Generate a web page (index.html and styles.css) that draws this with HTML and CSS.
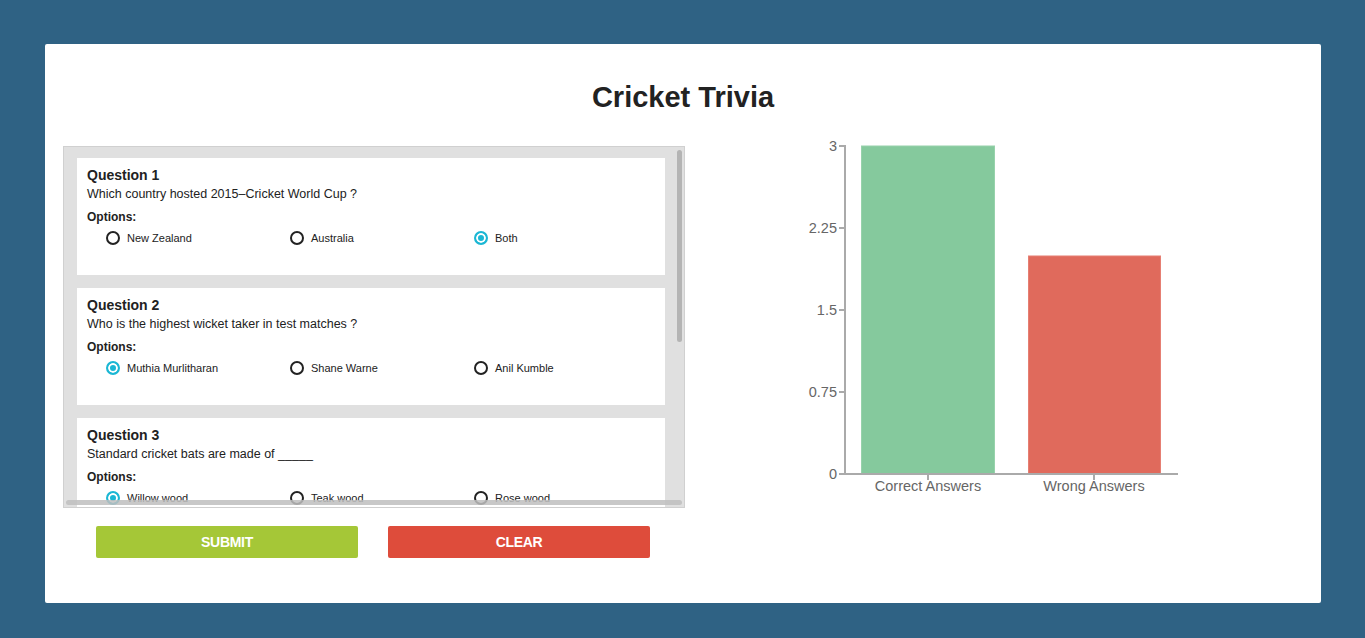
FILE: index.html
```html
<!DOCTYPE html>
<html lang="en">
<head>
<meta charset="utf-8">
<title>Cricket Trivia</title>
<link rel="stylesheet" href="styles.css">
</head>
<body>
<main class="panel">
  <h1 class="title">Cricket Trivia</h1>
  <div class="content">
    <section class="quiz">
      <div class="question-box">
        <div class="question-list">
          <div class="question-card">
            <h4 class="q-title">Question 1</h4>
            <p class="q-text">Which country hosted 2015–Cricket World Cup ?</p>
            <p class="q-options-label">Options:</p>
            <div class="options">
              <label class="option"><input type="radio" name="q1"><span>New Zealand</span></label>
              <label class="option"><input type="radio" name="q1"><span>Australia</span></label>
              <label class="option"><input type="radio" name="q1" checked><span>Both</span></label>
            </div>
          </div>
          <div class="question-card">
            <h4 class="q-title">Question 2</h4>
            <p class="q-text">Who is the highest wicket taker in test matches ?</p>
            <p class="q-options-label">Options:</p>
            <div class="options">
              <label class="option"><input type="radio" name="q2" checked><span>Muthia Murlitharan</span></label>
              <label class="option"><input type="radio" name="q2"><span>Shane Warne</span></label>
              <label class="option"><input type="radio" name="q2"><span>Anil Kumble</span></label>
            </div>
          </div>
          <div class="question-card">
            <h4 class="q-title">Question 3</h4>
            <p class="q-text">Standard cricket bats are made of _____</p>
            <p class="q-options-label">Options:</p>
            <div class="options">
              <label class="option"><input type="radio" name="q3" checked><span>Willow wood</span></label>
              <label class="option"><input type="radio" name="q3"><span>Teak wood</span></label>
              <label class="option"><input type="radio" name="q3"><span>Rose wood</span></label>
            </div>
          </div>
        </div>
        <div class="scroll-thumb scroll-thumb-v"></div>
        <div class="scroll-thumb scroll-thumb-h"></div>
      </div>
      <div class="actions">
        <button class="btn btn-submit" type="button">SUBMIT</button>
        <button class="btn btn-clear" type="button">CLEAR</button>
      </div>
    </section>
    <section class="chart">
      <svg class="chart-svg" width="400" height="370" viewBox="0 0 400 370">
        <g class="bars">
          <rect x="71.5" y="6" width="133" height="328" fill="#85c99d" stroke="#97d2ab" stroke-width="1"/>
          <rect x="238.5" y="116" width="132" height="218" fill="#e06a5c" stroke="#e67f73" stroke-width="1"/>
        </g>
        <g class="axis" stroke="#aaaaaa" stroke-width="2" fill="none">
          <line x1="55" y1="5" x2="55" y2="335"/>
          <line x1="54" y1="334" x2="388" y2="334"/>
          <line x1="49" y1="6" x2="55" y2="6"/>
          <line x1="49" y1="88" x2="55" y2="88"/>
          <line x1="49" y1="170" x2="55" y2="170"/>
          <line x1="49" y1="252" x2="55" y2="252"/>
          <line x1="49" y1="334" x2="55" y2="334"/>
          <line x1="138" y1="334" x2="138" y2="340"/>
          <line x1="304" y1="334" x2="304" y2="340"/>
        </g>
        <g class="tick-labels" text-anchor="end">
          <text x="47" y="11">3</text>
          <text x="47" y="93">2.25</text>
          <text x="47" y="175">1.5</text>
          <text x="47" y="257">0.75</text>
          <text x="47" y="339">0</text>
        </g>
        <g class="cat-labels" text-anchor="middle">
          <text x="138" y="351">Correct Answers</text>
          <text x="304" y="351">Wrong Answers</text>
        </g>
      </svg>
    </section>
  </div>
</main>
</body>
</html>
```

FILE: styles.css
```css
* {
  box-sizing: border-box;
}

html, body {
  margin: 0;
  padding: 0;
}

body {
  background: #2f6284;
  padding: 44px 44px 35px 45px;
  font-family: "Liberation Sans", Arial, sans-serif;
  color: #222;
}

.panel {
  background: #fff;
  border-radius: 2px;
  height: 559px;
  padding: 37px 18px 0 18px;
}

.title {
  margin: 0 0 27px 0;
  font-size: 29px;
  line-height: 32px;
  font-weight: bold;
  text-align: center;
  color: #222;
}

.content {
  display: flex;
  align-items: flex-start;
  gap: 105px;
}

.quiz {
  width: 622px;
  padding-top: 6px;
}

.question-box {
  position: relative;
  height: 362px;
  border: 1px solid #d0d0d0;
  background: #e0e0e0;
  overflow: hidden;
}

.question-list {
  padding: 11px 11px 0 13px;
  display: flex;
  flex-direction: column;
  gap: 13px;
}

.scroll-thumb {
  position: absolute;
  border-radius: 3px;
}

.scroll-thumb-v {
  top: 3px;
  right: 2px;
  width: 5px;
  height: 192px;
  background: #b4b4b4;
}

.scroll-thumb-h {
  left: 2px;
  bottom: 2px;
  width: 616px;
  height: 5px;
  background: rgba(190, 190, 190, 0.85);
}

.question-card {
  width: 588px;
  height: 117px;
  background: #fff;
  padding: 9px 10px 0 10px;
}

.q-title {
  margin: 0;
  font-size: 14px;
  line-height: 16px;
  font-weight: bold;
  color: #222;
}

.q-text {
  margin: 0;
  padding-top: 1px;
  font-size: 12.5px;
  line-height: 20px;
  color: #222;
}

.q-options-label {
  margin: 5px 0 0 0;
  font-size: 12px;
  line-height: 16px;
  font-weight: bold;
  color: #222;
}

.options {
  display: grid;
  grid-template-columns: repeat(3, 184px);
  padding-left: 19px;
  margin-top: 5px;
}

.option {
  display: flex;
  align-items: center;
  gap: 7px;
  height: 16px;
  font-size: 11px;
  color: #222;
}

.option input {
  appearance: none;
  -webkit-appearance: none;
  margin: 0;
  width: 14px;
  height: 14px;
  border: 2px solid #222;
  border-radius: 50%;
  background: #fff;
  flex: none;
}

.option input:checked {
  border-color: #1bb7d4;
  background: #1bb7d4;
  box-shadow: inset 0 0 0 2px #fff;
}

.actions {
  display: flex;
  gap: 30px;
  padding-left: 33px;
  margin-top: 18px;
}

.btn {
  width: 262px;
  height: 32px;
  border: none;
  border-radius: 2px;
  color: #fff;
  font-family: "Liberation Sans Narrow", "Liberation Sans", Arial, sans-serif;
  font-size: 14px;
  font-weight: bold;
  letter-spacing: -0.3px;
  padding: 0;
}

.btn-submit {
  background: #a5c737;
}

.btn-clear {
  background: #de4c3b;
}

.chart-svg {
  display: block;
  overflow: visible;
}

.chart-svg text {
  font-family: "Liberation Sans", Arial, sans-serif;
  font-size: 14.5px;
  fill: #666;
}
```
